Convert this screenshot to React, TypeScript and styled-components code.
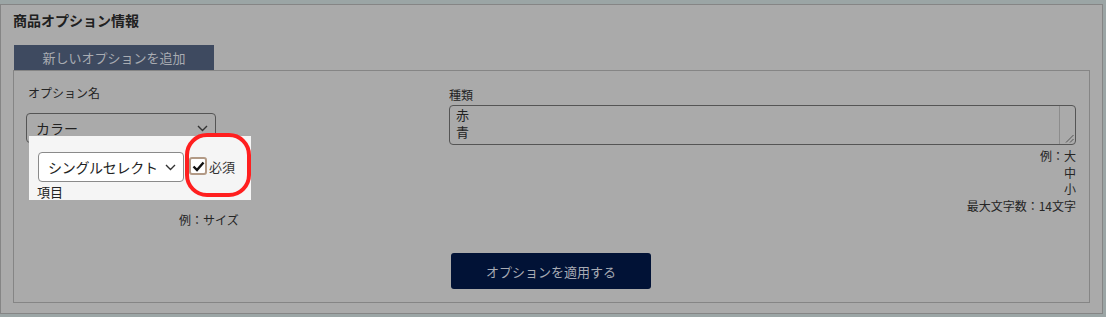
import React from "react";
import styled, { createGlobalStyle } from "styled-components";

const GlobalStyle = createGlobalStyle`
  html, body { margin: 0; padding: 0; }
  body {
    background: #9ba5a5;
    font-family: "Noto Sans CJK JP", "Noto Sans", sans-serif;
    color: #232323;
  }
  * { box-sizing: border-box; }
`;

const Page = styled.div`
  padding-top: 4px;
  width: 1103px;
`;

const Panel = styled.section`
  height: 310px;
  border: 1px solid #858585;
  background: #aaaaaa;
  padding: 5px 12px 0 12px;
`;

const Title = styled.h2`
  margin: 0;
  font-size: 14px;
  font-weight: 700;
  line-height: 20px;
  height: 20px;
  padding-top: 0;
  color: #202020;
  position: relative;
  top: 0;
`;

const TabRow = styled.div`
  display: flex;
  margin-top: 15px;
  padding-left: 1px;
`;

const Tab = styled.div`
  width: 200px;
  height: 25px;
  background: #3e4a60;
  color: #a9acb2;
  font-size: 13px;
  line-height: 25px;
  text-align: center;
`;

const InnerBox = styled.div`
  width: 1077px;
  height: 233px;
  border: 1px solid #858585;
  display: flex;
  flex-direction: column;
  padding: 0 12px;
`;

const Columns = styled.div`
  height: 182px;
  display: grid;
  grid-template-columns: 423px 1fr;
`;

const LeftCol = styled.div`
  padding-top: 13px;
  display: flex;
  flex-direction: column;
`;

const RightCol = styled.div`
  padding-top: 15px;
  display: flex;
  flex-direction: column;
`;

const Label = styled.div<{ $indent?: number }>`
  font-size: 12px;
  line-height: 18px;
  color: #242424;
  padding-left: ${(p) => p.$indent ?? 0}px;
`;

const SelectBox = styled.div<{ $width: number; $light?: boolean }>`
  width: ${(p) => p.$width}px;
  height: 30px;
  border: 1px solid ${(p) => (p.$light ? "#8a8a8a" : "#555")};
  border-radius: 4px;
  background: ${(p) => (p.$light ? "#ffffff" : "transparent")};
  display: flex;
  align-items: center;
  justify-content: space-between;
  padding: 0 7px 0 9px;
  font-size: 14px;
  letter-spacing: ${(p) => (p.$light ? "-0.3px" : "0")};
  color: #222;
  white-space: nowrap;
`;

const SelectMain = styled(SelectBox)`
  margin-top: 11px;
`;

const Chevron = () => (
  <svg width="11" height="7" viewBox="0 0 11 7">
    <polyline points="1,1 5.5,5.5 10,1" fill="none" stroke="#333" strokeWidth="1.4" />
  </svg>
);

const Spotlight = styled.div`
  position: relative;
  margin-top: -7px;
  margin-left: 3px;
  width: 222px;
  height: 64px;
  background: #f5f5f5;
  padding: 16px 0 0 9px;
`;

const TypeRow = styled.div`
  display: flex;
  align-items: center;
  gap: 5px;
`;

const CheckLabel = styled.label`
  display: flex;
  align-items: center;
  gap: 2px;
  font-size: 13px;
  color: #333;
  margin-top: -2px;
`;

const CheckBox = styled.span`
  width: 18px;
  height: 18px;
  border: 2px solid #b29a86;
  border-radius: 3px;
  background: #fff;
  display: inline-flex;
  align-items: center;
  justify-content: center;
`;

const ItemLabel = styled.div`
  font-size: 13px;
  line-height: 14px;
  margin-top: 3px;
  margin-left: -1px;
  color: #222;
`;

const Ring = styled.div`
  position: absolute;
  left: 156px;
  top: -3px;
  width: 66px;
  height: 64px;
  border: 4.5px solid #ff1f1f;
  border-radius: 22px;
  pointer-events: none;
`;

const Hint = styled.div<{ $indent?: number }>`
  font-size: 12px;
  line-height: 16px;
  margin-top: 12px;
  padding-left: ${(p) => p.$indent ?? 0}px;
  color: #252525;
`;

const TextField = styled.div`
  margin-top: 1px;
  width: 627px;
  height: 40px;
  border: 1px solid #555;
  border-radius: 4px;
  display: flex;
`;

const TextArea = styled.textarea`
  flex: 1;
  border: none;
  background: transparent;
  resize: none;
  outline: none;
  overflow: hidden;
  font-family: inherit;
  font-size: 13px;
  line-height: 17px;
  color: #222;
  padding: 0 6px;
`;

const Gutter = styled.div`
  width: 16px;
  border-left: 1px solid #8c8c8c;
  display: flex;
  flex-direction: column;
  justify-content: flex-end;
  align-items: flex-end;
  padding: 0 1px 1px 0;
`;

const Examples = styled.div`
  margin-top: 3px;
  width: 627px;
  text-align: right;
  font-size: 12px;
  line-height: 16.6px;
  color: #252525;
`;

const ButtonRow = styled.div`
  display: flex;
  justify-content: center;
`;

const ApplyButton = styled.button`
  width: 200px;
  height: 36px;
  background: #011236;
  border: none;
  border-radius: 3px;
  color: #a8abb4;
  font-family: inherit;
  font-size: 13px;
  cursor: pointer;
  margin-left: -1px;
`;

export default function App() {
  return (
    <>
      <GlobalStyle />
      <Page>
        <Panel>
          <Title>商品オプション情報</Title>
          <TabRow>
            <Tab>新しいオプションを追加</Tab>
          </TabRow>
          <InnerBox>
            <Columns>
              <LeftCol>
                <Label $indent={2}>オプション名</Label>
                <SelectMain $width={190}>
                  <span>カラー</span>
                  <Chevron />
                </SelectMain>
                <Spotlight>
                  <TypeRow>
                    <SelectBox $width={146} $light>
                      <span>シングルセレクト</span>
                      <Chevron />
                    </SelectBox>
                    <CheckLabel>
                      <CheckBox>
                        <svg width="13" height="11" viewBox="0 0 13 11">
                          <polyline
                            points="1.5,5.5 5,9 11.5,1.5"
                            fill="none"
                            stroke="#111"
                            strokeWidth="2.4"
                          />
                        </svg>
                      </CheckBox>
                      必須
                    </CheckLabel>
                  </TypeRow>
                  <ItemLabel>項目</ItemLabel>
                  <Ring />
                </Spotlight>
                <Hint $indent={153}>例：サイズ</Hint>
              </LeftCol>
              <RightCol>
                <Label>種類</Label>
                <TextField>
                  <TextArea defaultValue={"赤\n青"} />
                  <Gutter>
                    <svg width="9" height="9" viewBox="0 0 9 9">
                      <line x1="1" y1="8.5" x2="8.5" y2="1" stroke="#555" strokeWidth="1" />
                      <line x1="5" y1="8.5" x2="8.5" y2="5" stroke="#555" strokeWidth="1" />
                    </svg>
                  </Gutter>
                </TextField>
                <Examples>
                  例：大
                  <br />中
                  <br />小
                  <br />最大文字数：14文字
                </Examples>
              </RightCol>
            </Columns>
            <ButtonRow>
              <ApplyButton>オプションを適用する</ApplyButton>
            </ButtonRow>
          </InnerBox>
        </Panel>
      </Page>
    </>
  );
}
